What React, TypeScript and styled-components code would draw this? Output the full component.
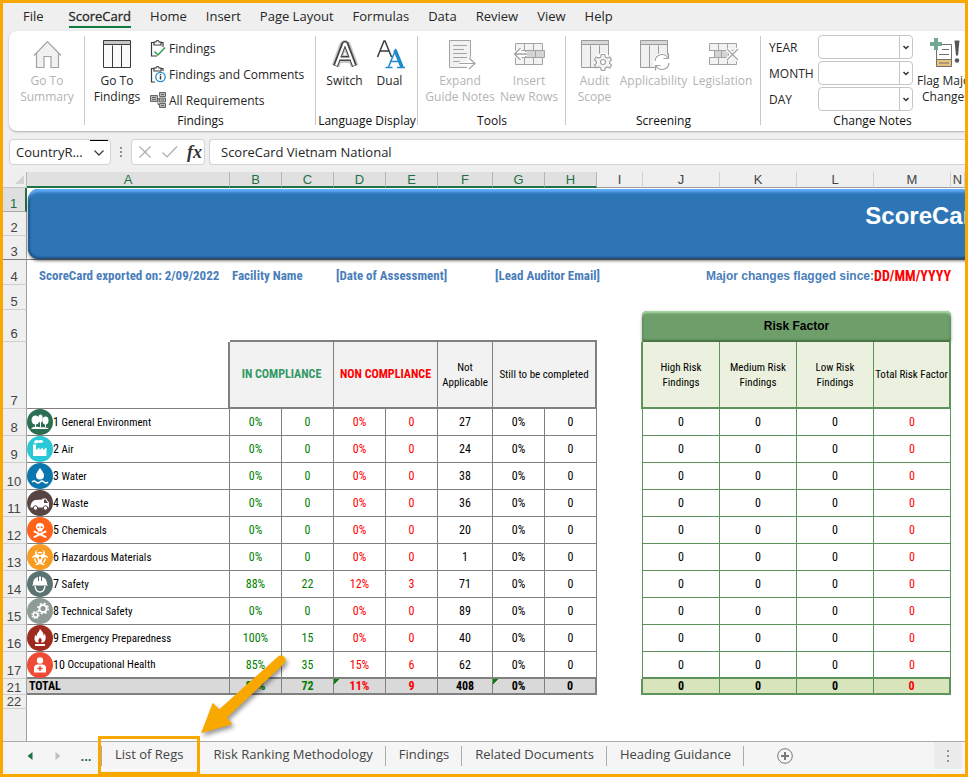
import React from 'react';
import styled, { createGlobalStyle, css } from 'styled-components';
import { FaBiohazard, FaSkullCrossbones } from 'react-icons/fa';

const UI = '"Open Sans", "Noto Sans", sans-serif';
const ARIAL = '"Liberation Sans", Arial, sans-serif';
const NARROW = '"Roboto Condensed", "Liberation Sans", sans-serif';
const ORANGE = '#f9a800';
const GREEN = '#1e7145';
const GREY_LINE = '#808080';
const RISK_LINE = '#5f935c';

const Global = createGlobalStyle`
  *, *::before, *::after { box-sizing: border-box; }
  body { margin: 0; }
  button, input, select { font: inherit; color: inherit; }
  button { background: none; border: 0; padding: 0; cursor: pointer; white-space: nowrap; }
`;

const Frame = styled.div`
  display: flex;
  flex-direction: column;
  min-height: 100vh;
  border: 3px solid ${ORANGE};
  background: #efefef;
  overflow: hidden;
  font-family: ${UI};
  color: #262626;
`;

/* ---------- menu ---------- */

const Menu = styled.nav`
  display: flex;
  gap: 19px;
  height: 28px;
  padding-left: 20px;
  font-size: 13px;
`;

const MenuItem = styled.button<{ $active?: boolean }>`
  height: 25px;
  padding-top: 3px;
  line-height: 20px;
  border-bottom: 2px solid ${p => (p.$active ? '#107c41' : 'transparent')};
  -webkit-text-stroke: ${p => (p.$active ? '0.3px #262626' : '0')};
  &:first-child { margin-right: 6px; }
`;

/* ---------- ribbon ---------- */

const Ribbon = styled.div`
  display: flex;
  flex: none;
  height: 100px;
  margin-left: 6px;
  background: #fff;
  border-radius: 8px 0 0 8px;
  box-shadow: 0 1px 2px rgba(0, 0, 0, 0.28);
  font-size: 12px;
`;

const Group = styled.section<{ $w: number }>`
  position: relative;
  display: flex;
  flex-direction: column;
  flex: none;
  width: ${p => p.$w}px;
  &:not(:last-child)::after {
    content: '';
    position: absolute;
    right: 0;
    top: 5px;
    bottom: 6px;
    width: 1px;
    background: #c8c8c8;
  }
`;

const GroupBody = styled.div<{ $start?: boolean }>`
  display: flex;
  flex: 1;
  justify-content: ${p => (p.$start ? 'flex-start' : 'center')};
`;

const GroupLabel = styled.div`
  height: 18px;
  line-height: 16px;
  text-align: center;
  color: #111;
`;

const BigButton = styled.button<{ $w: number }>`
  display: flex;
  flex-direction: column;
  align-items: center;
  align-self: flex-start;
  flex: none;
  width: ${p => p.$w}px;
  padding-top: 7px;
  line-height: 16px;
  white-space: pre;
  &:disabled { color: #b4b4b4; cursor: default; }
  svg { margin-bottom: 3px; overflow: visible; }
`;

const SmallStack = styled.div`
  display: flex;
  flex-direction: column;
  padding: 4px 0 0 1px;
`;

const SmallButton = styled.button`
  display: flex;
  align-items: center;
  gap: 3px;
  height: 26px;
`;

const DateGrid = styled.div`
  display: grid;
  grid-template-columns: 49px 95px;
  grid-auto-rows: 24px;
  row-gap: 2px;
  align-items: center;
  padding: 4px 4px 0 8px;
  align-self: flex-start;
`;

const SelectBox = styled.div`
  position: relative;
  height: 24px;
  svg {
    position: absolute;
    right: 1px;
    top: 1px;
    pointer-events: none;
  }
`;

const Select = styled.select`
  appearance: none;
  width: 100%;
  height: 24px;
  border: 1px solid #c6c6c6;
  border-radius: 4px;
  background: #fff;
`;

/* ---------- formula bar ---------- */

const FormulaBar = styled.div`
  display: flex;
  flex: none;
  height: 26px;
  margin: 8px 0 7px 6px;
  font-size: 13px;
`;

const NameBox = styled.div`
  display: flex;
  width: 102px;
  background: #fff;
  border: 1px solid #d2d2d2;
  border-radius: 4px;
  input {
    flex: 1;
    min-width: 0;
    padding: 0 0 0 6px;
    border: 0;
    background: none;
    outline: 0;
  }
`;

const NameArrow = styled.button`
  display: grid;
  place-items: center;
  width: 18px;
  margin-right: 2px;
  border-top: 1px solid #000;
`;

const Dots = styled.span`
  display: flex;
  flex-direction: column;
  align-items: center;
  justify-content: center;
  gap: 2px;
  width: 20px;
  i { width: 2px; height: 2px; background: #949494; }
`;

const FxBox = styled.div`
  display: flex;
  align-items: center;
  gap: 9px;
  width: 74px;
  padding: 0 6px;
  background: #fff;
  border: 1px solid #d2d2d2;
  border-radius: 4px;
  svg { display: block; }
`;

const FxButton = styled.button`
  && { font: italic bold 18px/20px "Liberation Serif", serif; }
  color: #333;
`;

const FormulaInput = styled.input`
  flex: 1;
  min-width: 0;
  margin-left: 4px;
  padding: 0 0 0 11px;
  border: 1px solid #d2d2d2;
  border-right: 0;
  border-radius: 4px 0 0 4px;
  background: #fff;
  outline: 0;
`;

/* ---------- sheet ---------- */

const Sheet = styled.main`
  position: relative;
  flex: 1;
  background: #fff;
  border-bottom: 1px solid #ababab;
  overflow: hidden;
`;

const Grid = styled.table`
  width: 100%;
  table-layout: fixed;
  border-collapse: separate;
  border-spacing: 0;
  font-family: ${NARROW};
  font-size: 12px;
  color: #000;
  th, td { padding: 0; overflow: visible; }
`;

const Col = styled.col<{ $w?: number }>`
  width: ${p => (p.$w ? p.$w + 'px' : 'auto')};
`;

const ColHead = styled.th<{ $on?: boolean }>`
  height: 16px;
  font: 13px/13px ${ARIAL};
  text-align: center;
  white-space: nowrap;
  color: ${p => (p.$on ? GREEN : '#444')};
  background: ${p => (p.$on ? '#e0e0e0' : '#efefef')};
  border-bottom: ${p => (p.$on ? '2px solid ' + GREEN : '1px solid #9b9b9b')};
  border-right: 1px solid ${p => (p.$on ? '#b5b5b5' : '#d0d0d0')};
`;

const Corner = styled.td`
  background: #efefef;
  border-right: 1px solid #b5b5b5;
  border-bottom: 1px solid #c4c4c4;
  svg { display: block; margin: 0 0 0 12px; }
`;

const RowHead = styled.th<{ $h: number; $on?: boolean; $frozen?: boolean; $last?: boolean }>`
  height: ${p => p.$h}px;
  font: 13px/13px ${ARIAL};
  text-align: center;
  vertical-align: bottom;
  color: ${p => (p.$on ? GREEN : '#444')};
  background: ${p => (p.$on ? '#dfdfdf' : '#efefef')};
  border-right: ${p => (p.$on ? '2px solid ' + GREEN : '1px solid #a0a0a0')};
  border-bottom: ${p =>
    p.$last ? '0' : '1px solid ' + (p.$frozen ? '#7f7f7f' : p.$on ? '#a8a8a8' : '#cfcfcf')};
  && { padding: 0 1px ${p => (p.$h > 20 ? 1 : 0)}px 0; }
`;

type Tone = 'green' | 'red' | 'black';
const toneColor: Record<Tone, string> = { green: '#008000', red: '#ff0000', black: '#000' };

const Cell = styled.td<{ $tone?: Tone; $risk?: boolean; $total?: boolean; $right?: boolean; $bottom?: boolean }>`
  text-align: center;
  vertical-align: middle;
  line-height: 14px;
  color: ${p => toneColor[p.$tone ?? 'black']};
  border-style: solid;
  border-color: ${p => (p.$risk ? RISK_LINE : GREY_LINE)};
  border-width: 0 ${p => (p.$right ? 2 : 1)}px ${p => (p.$bottom ? 2 : 1)}px 0;
  ${p => p.$total && css`
    font-weight: bold;
    background: ${p.$risk ? '#d8e4bc' : '#d9d9d9'};
  `}
`;

const Flagged = styled(Cell)`
  background: linear-gradient(135deg, #107c10 0 4px, transparent 4px) no-repeat, #d9d9d9;
`;

const TotalLabel = styled(Cell)`
  text-align: left;
  && { padding-left: 2px; }
`;

const Category = styled.td<{ $bottom?: boolean }>`
  border-right: 1px solid ${GREY_LINE};
  border-bottom: ${p => (p.$bottom ? 2 : 1)}px solid ${GREY_LINE};
  font-size: 11px;
`;

const CategoryInner = styled.div`
  display: flex;
  align-items: center;
  height: 25px;
  white-space: pre;
  svg { flex: none; }
  b { font-size: 12px; font-weight: normal; }
`;

const Gap = styled.td<{ $edge?: 'grey' | 'risk' | 'riskThin' }>`
  ${p => p.$edge === 'grey' && css`
    border-right: 2px solid ${GREY_LINE};
    border-bottom: 1px solid ${GREY_LINE};
  `}
  ${p => p.$edge === 'risk' && css`border-right: 2px solid ${RISK_LINE};`}
  ${p => p.$edge === 'riskThin' && css`border-right: 1px solid ${RISK_LINE};`}
`;

const TopEdge = styled.td`
  border-bottom: 2px solid ${GREY_LINE};
`;

const FreezeCell = styled.td`
  border-bottom: 1px solid #7f7f7f;
`;

const HeadCell = styled.th<{ $risk?: boolean; $tone?: 'green' | 'red'; $right?: boolean }>`
  text-align: center;
  vertical-align: middle;
  font-size: ${p => (p.$tone ? 12 : 11)}px;
  font-weight: ${p => (p.$tone ? 'bold' : 'normal')};
  line-height: 15px;
  white-space: pre;
  color: ${p => (p.$tone === 'green' ? '#339966' : p.$tone === 'red' ? '#ff0000' : '#000')};
  background: ${p => (p.$risk ? '#ebf1de' : '#f2f2f2')};
  border-style: solid;
  border-color: ${p => (p.$risk ? RISK_LINE : GREY_LINE)};
  border-width: 0 ${p => (p.$right ? 2 : 1)}px 2px 0;
`;

const Info = styled.td<{ $pad?: number }>`
  vertical-align: bottom;
  color: #4a7ebb;
  font-weight: bold;
  font-size: 13px;
  line-height: 18px;
  white-space: nowrap;
  && { padding-left: ${p => p.$pad ?? 2}px; }
`;

const Since = styled.td`
  vertical-align: bottom;
  font: bold 12px/18px ${ARIAL};
  color: #4a7ebb;
  text-align: right;
  white-space: nowrap;
`;

const SinceDate = styled.td`
  vertical-align: bottom;
  font-size: 14px;
  font-weight: bold;
  line-height: 18px;
  color: #ff0000;
  text-align: left;
  white-space: nowrap;
`;

const RiskCell = styled.td`
  vertical-align: bottom;
`;

const RiskTitle = styled.div`
  height: 31px;
  margin-left: -1px;
  border-radius: 5px 5px 2px 2px;
  background: #6e9e6a;
  box-shadow: inset 0 2px 2px #a9dba6, inset 1px 0 2px #47713f, inset -1px -2px 2px #47713f,
    0 1px 3px rgba(0, 0, 0, 0.4);
  font: bold 12px/31px ${ARIAL};
  text-align: center;
`;

const Banner = styled.div`
  position: absolute;
  left: 25px;
  top: 17px;
  width: 1796px;
  height: 70px;
  border-radius: 11px;
  background: #2e75b6;
  box-shadow: inset 0 5px 3px -2px #62b0ff, inset 0 1px 1px #3a6fa8, inset 2px 0 2px #22598f,
    inset 0 -2px 2px #1f4f80, 0 2px 3px rgba(0, 0, 0, 0.5);
`;

const BannerTitle = styled.h1`
  margin: 0;
  padding-top: 13px;
  font: bold 24px/28px ${ARIAL};
  text-align: center;
  color: #fff;
`;

/* ---------- sheet tabs ---------- */

const TabBar = styled.footer`
  display: flex;
  align-items: center;
  flex: none;
  height: 28px;
  margin-bottom: 4px;
  background: #f5f5f5;
  border-bottom: 1px solid #fff;
  box-shadow: 0 4px 0 #f2f2f2;
  font-size: 13px;
  color: #444;
`;

const NavButton = styled.button`
  display: grid;
  place-items: center;
  width: 28px;
  height: 26px;
  font-weight: bold;
  line-height: 18px;
  color: ${GREEN};
`;

const NavGroup = styled.div`
  display: flex;
  width: 98px;
  padding-left: 13px;
`;

const Tab = styled.button<{ $marked?: boolean }>`
  position: relative;
  padding: 0 12px 0 13px;
  height: 20px;
  line-height: 16px;
  padding-bottom: 3px;
  border-right: 1px solid ${p => (p.$marked ? 'transparent' : '#ababab')};
  ${p => p.$marked && css`
    border-left: 1px solid #ababab;
    padding: 0 16px 3px 13px;
    &::after {
      content: '';
      position: absolute;
      inset: -10px -1px -9px -4px;
      border: 3px solid ${ORANGE};
    }
  `}
`;

const Arrow = styled.svg`
  position: absolute;
  left: 97px;
  bottom: 30px;
  overflow: visible;
  pointer-events: none;
  z-index: 2;
  filter: drop-shadow(2px 3px 2px rgba(0, 0, 0, 0.4));
`;

const AddButton = styled.button`
  margin-left: 33px;
  svg { display: block; }
`;

const ScrollEnd = styled.div`
  display: flex;
  justify-content: center;
  align-self: stretch;
  width: 28px;
  margin: 0 3px 0 auto;
  background: #ececec;
  ${Dots} { gap: 3px; }
`;

/* ---------- icons ---------- */

const HouseIcon = () => (
  <svg width="32" height="32" fill="none" stroke="#a3a3a3" strokeWidth="1.2">
    <path d="M5.5 15v14.5h8v-11h6v11h8V15L16.500 4Z" fill="#f1f1f1" stroke="none" />
    <path d="M3 17.500 16.500 3.500 30 17.500M5.500 15.500v14h7.500v-11h7v11h7.500v-14" />
  </svg>
);

const ColumnsArt = ({ dim }: { dim?: boolean }) => (
  <g stroke={dim ? '#9b9b9b' : '#3b3b3b'} fill={dim ? '#f0f0f0' : '#fafafa'}>
    <path d="M2.500 3.500h27v26h-27zM11.500 7.500v22M20.500 7.500v22" />
    <path d="M2.500 2.500h27v4h-27z" fill={dim ? '#d8d8d8' : '#c6c6c6'} />
  </g>
);

const ColumnsIcon = () => <svg width="32" height="32"><ColumnsArt /></svg>;

const AuditIcon = () => (
  <svg width="32" height="32">
    <ColumnsArt dim />
    <g transform="translate(24 24)" fill="#fff">
      <circle r="9" />
      <path
        d="M-1.700-7.500h3.400l.6 2.500 2 1 2.500-1 1.700 3-1.900 1.700v1.600l1.900 1.700-1.700 3-2.500-1-2 1-.6 2.500h-3.400l-.6-2.500-2-1-2.500 1-1.700-3 1.900-1.700v-1.600l-1.900-1.700 1.700-3 2.500 1 2-1Z"
        stroke="#a3a3a3" strokeWidth="1.200" fill="#f4f4f4"
      />
      <circle r="2.500" stroke="#a3a3a3" strokeWidth="1.200" />
    </g>
  </svg>
);

const RefreshIcon = () => (
  <svg width="32" height="32">
    <ColumnsArt dim />
    <circle cx="24" cy="24" r="9" fill="#fff" />
    <g fill="none" stroke="#a3a3a3" strokeWidth="1.200">
      <path d="M17 23a7 7 0 0 1 13-3M31 25a7 7 0 0 1-13 3" />
      <path d="M30.500 15.500v5h-5M17.500 32.500v-5h5" />
    </g>
  </svg>
);

const RowsArt = () => (
  <g stroke="#a3a3a3" fill="#f2f2f2">
    <path d="M2.500 5.500h27v21h-27zM11.500 5.500v21M20.500 5.500v21M2.500 12.500h27M2.500 19.500h27" />
  </g>
);

const InsertRowsIcon = () => (
  <svg width="32" height="32">
    <RowsArt />
    <path d="M0 13h12v6H0z" fill="#fff" />
    <path d="M12.500 12.500h19v7h-19zM22.500 12.500v7" fill="#d4d4d4" stroke="#a3a3a3" />
    <path d="M14 16H2M8 10l-6 6 6 6" fill="none" stroke="#fff" strokeWidth="4" />
    <path d="M14 16H1.500M7.500 10l-6 6 6 6" fill="none" stroke="#a3a3a3" strokeWidth="1.400" />
  </svg>
);

const LegislationIcon = () => (
  <svg width="32" height="32">
    <RowsArt />
    <path d="M2 13h5v6H2zM21 13h9v6h-9z" fill="#fff" />
    <path d="M7.500 12.500h14v7h-14zM14.500 12.500v7" fill="#d4d4d4" stroke="#a3a3a3" />
    <path d="M20 11l11 11M31 11 20 22" stroke="#fff" strokeWidth="4" />
    <path d="M20 11l11 11M31 11 20 22" stroke="#a3a3a3" strokeWidth="1.200" />
  </svg>
);

const NotesIcon = () => (
  <svg width="32" height="32" fill="none" stroke="#a3a3a3">
    <path d="M5.500 2.500h21v27h-21z" fill="#f1f1f1" />
    <path d="M9 7.500h14M9 11.500h11M9 15.500h14M9 19.500h14M9 23.500h8" />
    <path d="M15 25.500h14M24 20l6 5.500-6 5.500" stroke="#fff" strokeWidth="4" />
    <path d="M15 25.500h15.500M25 20l6 5.500-6 5.500" strokeWidth="1.200" />
  </svg>
);

const SwitchIcon = () => (
  <svg width="32" height="32" fill="none" strokeLinejoin="bevel">
    <path d="M6.500 28 14.500 6h3l8 22M10 21h12" stroke="#c9c9c9" strokeWidth="8" />
    <path d="M6.500 28 15 5.500h2L25.500 28M10.500 20.500h11" stroke="#444" strokeWidth="5" />
    <path d="M7 27.500 15.500 5.500h1L25 27.500M10.500 20.500h11" stroke="#fff" strokeWidth="2.200" />
  </svg>
);

const DualIcon = () => (
  <svg width="32" height="32" fill="none">
    <path d="M3.500 19 10 3h1l6.500 16M6 13h9" stroke="#3b3b3b" strokeWidth="1.500" />
    <path d="M14.500 29 21.500 12l7 17" stroke="#1e8bcd" strokeWidth="1.500" />
    <path d="M21 12l7 17" stroke="#1e8bcd" strokeWidth="3.500" />
    <path d="M16.500 23.500h8" stroke="#1e8bcd" strokeWidth="1.500" />
    <path d="M11.500 29.500h7M23 29.500h8" stroke="#1e8bcd" strokeWidth="1.500" />
  </svg>
);

const FlagIcon = () => (
  <svg width="32" height="32">
    <path d="M6.500 6.500h15v15h-15z" fill="#fff" stroke="#6f6f6f" />
    <path d="M6.500 21.500h15v7h-15z" fill="#e9c27a" stroke="#6f6f6f" />
    <path d="M9 11.500h10M9 16.500h10M9 25h10" stroke="#6f6f6f" />
    <path d="M0 0h12v12H0z" fill="#fff" />
    <path d="M4 0h4v4h4v4H8v4H4V8H0V4h4z" fill="#74a692" />
    <path d="M24.500 2.500h5l-1.500 15h-2z" fill="#555" />
    <circle cx="27" cy="22.500" r="2.200" fill="#555" />
  </svg>
);

const ClipCheckIcon = () => (
  <svg width="16" height="18" fill="none" stroke="#3b3b3b" strokeWidth="1.200">
    <path d="M4 3.500H1.500V17H7M11 3.500h2V8" />
    <path d="M4 3h2a1.500 1.500 0 0 1 3 0h2v3H4z" />
    <path d="M4.500 12.500 8 16l7-7.500" stroke="#2fa24c" strokeWidth="1.500" />
  </svg>
);

const ClipInfoIcon = () => (
  <svg width="16" height="18" fill="none" stroke="#3b3b3b" strokeWidth="1.200">
    <path d="M4 3.500H1.500V17H5M11 3.500h2V6" />
    <path d="M4 3h2a1.500 1.500 0 0 1 3 0h2v3H4z" />
    <circle cx="10.500" cy="12" r="4.700" stroke="#1e8bcd" strokeWidth="1.300" fill="#fff" />
    <path d="M10.500 11v3.500M10.500 9v1.200" strokeWidth="1.500" />
  </svg>
);

const FlowIcon = () => (
  <svg width="16" height="16" stroke="#666" fill="#b9b9b9">
    <path d="M8 6.500h3M8 6.500v6h3" fill="none" />
    <path d="M.5 3.500h7v6h-7zM9.500.5h6v4h-6zM9.500 6h6v4h-6zM9.500 11.500h6v4h-6z" />
    <path d="M2 5.500h4M2 7.500h4M11 2.500h3M11 8h3M11 13.500h3" />
  </svg>
);

const Chevron = () => (
  <svg width="13" height="22" fill="none" stroke="#333">
    <path d="M.5 0v22" stroke="#c6c6c6" />
    <path d="M4.500 10l2.500 2.500L9.500 10" strokeWidth="1.500" />
  </svg>
);

const art: React.ReactNode[] = [
  <g key="trees">
    <ellipse cx="8.500" cy="11" rx="4" ry="4.500" /><ellipse cx="13.500" cy="9.500" rx="2.200" ry="4" />
    <ellipse cx="18.500" cy="11.500" rx="3" ry="4" />
    <path d="M8 14h1v4H8zM13 12h1v6h-1zM18 14h1v4h-1zM4 20c2-3 5-3 8-2s6-1 10 2z" />
  </g>,
  <g key="factory">
    <path d="M6 8.500h3V14l3.500-2.500V14l3.500-2.500V14l3.500-2.500V20H6z" />
    <path d="M7 7c0-2.500 2.500-4 4-2.500 1.500-1 5-.5 5.500 1-1 1.700-4 1.700-5.500 1C9.500 8 8 7 7 7" />
  </g>,
  <g key="water">
    <path d="M13 5c-2 3-4 5-4 7.500a4 4 0 0 0 8 0C17 10 15 8 13 5" />
    <path d="M5 19q2-2 4 0t4 0 4 0 4 0" fill="none" stroke="#fff" strokeWidth="1.300" />
  </g>,
  <g key="truck">
    <path d="M3.500 17.500c0-4 2-7 5-7.500l7-.5v-1h3.500l3 4v5z" />
    <path d="M17 9.500v3.500h4l-2.500-3.500z" fill="#574443" />
    <circle cx="8.500" cy="18" r="2.200" stroke="#574443" /><circle cx="18.500" cy="18" r="2.200" stroke="#574443" />
  </g>,
  <FaSkullCrossbones key="skull" x="5.500" y="6" size={15} color="#fff" />,
  <FaBiohazard key="bio" x="4.500" y="5" size={17} color="#fff" />,
  <g key="helmet">
    <path d="M6 13c0-4 2-6.500 5-7v4h1V5.500h2V10h1V6c3 .5 5 3 5 7l1 1.500H5z" />
    <path d="M8 15c.5 4 2.500 6 5 6s4.500-2 5-6" fill="none" stroke="#fff" strokeWidth="1.400" />
  </g>,
  <g key="gears" fill="none" stroke="#fff">
    <circle cx="16" cy="10.500" r="3.600" strokeWidth="2" />
    <circle cx="16" cy="10.500" r="5.200" strokeWidth="1.500" strokeDasharray="2.100 2" />
    <circle cx="8.500" cy="17" r="2.200" strokeWidth="1.500" />
    <circle cx="8.500" cy="17" r="3.500" strokeWidth="1.200" strokeDasharray="1.500 1.250" />
  </g>,
  <g key="fire">
    <path d="M13 3.500c1 3 4 3.500 3.500 7 1-.5 1-1.500 1-2 2 3 1.500 8-1.500 9h-2c1.500-2 .5-3.500-1-5-1 1.500-2.500 3-1 5h-2C7 16.500 7 12.500 8.500 9.500c.2 1 .5 1.500 1.200 2C9.500 8 12.500 7 13 3.500" />
    <path d="M8 19h10v2H8z" />
  </g>,
  <g key="person">
    <circle cx="13" cy="8.500" r="3.200" /><path d="M7 20.500v-5c0-2 2-3 3.500-3h5c1.500 0 3.500 1 3.500 3v5z" />
    <path d="M12.300 14h1.400v1.800h1.800v1.400h-1.800V19h-1.400v-1.800h-1.800v-1.400h1.800z" fill="#e8452f" />
  </g>,
];

const CategoryIcon = ({ color, index }: { color: string; index: number }) => (
  <svg width="26" height="26" viewBox="0 0 26 26" fill="#fff" aria-hidden>
    <circle cx="13" cy="13" r="13" fill={color} />
    {art[index]}
  </svg>
);

/* ---------- data ---------- */

const menu = ['File', 'ScoreCard', 'Home', 'Insert', 'Page Layout', 'Formulas', 'Data', 'Review', 'View', 'Help'];

const columns: [string, number | undefined][] = [
  ['A', 203], ['B', 52], ['C', 52], ['D', 52], ['E', 52], ['F', 55], ['G', 52], ['H', 52],
  ['I', 46], ['J', 77], ['K', 77], ['L', 77], ['M', 77], ['N', undefined],
];

const rows: [string, string, string[]][] = [
  ['General Environment', '#2b6e51', ['0%', '0', '0%', '0', '27', '0%', '0']],
  ['Air', '#28c8d6', ['0%', '0', '0%', '0', '24', '0%', '0']],
  ['Water', '#0a76ad', ['0%', '0', '0%', '0', '38', '0%', '0']],
  ['Waste', '#574443', ['0%', '0', '0%', '0', '36', '0%', '0']],
  ['Chemicals', '#ff6319', ['0%', '0', '0%', '0', '20', '0%', '0']],
  ['Hazardous Materials', '#f79b22', ['0%', '0', '0%', '0', '1', '0%', '0']],
  ['Safety', '#5b7471', ['88%', '22', '12%', '3', '71', '0%', '0']],
  ['Technical Safety', '#8f9c96', ['0%', '0', '0%', '0', '89', '0%', '0']],
  ['Emergency Preparedness', '#9f2a1e', ['100%', '15', '0%', '0', '40', '0%', '0']],
  ['Occupational Health', '#ee4a35', ['85%', '35', '15%', '6', '62', '0%', '0']],
];

const totals = ['89%', '72', '11%', '9', '408', '0%', '0'];
const tones: Tone[] = ['green', 'green', 'red', 'red', 'black', 'black', 'black'];
const riskTones: Tone[] = ['black', 'black', 'black', 'red'];

const SheetGrid = () => (
  <Grid>
    <colgroup>
      <Col $w={24} />
      {columns.map(([name, w]) => <Col key={name} $w={w} />)}
    </colgroup>
    <thead>
      <tr>
        <Corner><svg width="9" height="9"><path d="M9 0v9H0z" fill="#d2d2d2" /></svg></Corner>
        {columns.map(([name], i) => <ColHead key={name} scope="col" $on={i < 8}>{name}</ColHead>)}
      </tr>
    </thead>
    <tbody>
      <tr><RowHead $h={24} $on>1</RowHead><td colSpan={14} /></tr>
      <tr><RowHead $h={24}>2</RowHead><td colSpan={14} /></tr>
      <tr><RowHead $h={24} $frozen>3</RowHead><FreezeCell colSpan={14} /></tr>
      <tr>
        <RowHead $h={25}>4</RowHead>
        <Info $pad={12}>ScoreCard exported on: 2/09/2022</Info>
        <Info colSpan={2}>Facility Name</Info>
        <Info colSpan={3}>[Date of Assessment]</Info>
        <Info colSpan={3}>[Lead Auditor Email]</Info>
        <Since colSpan={3}>Major changes flagged since:</Since>
        <SinceDate colSpan={2}>DD/MM/YYYY</SinceDate>
      </tr>
      <tr><RowHead $h={25}>5</RowHead><td colSpan={14} /></tr>
      <tr>
        <RowHead $h={32}>6</RowHead>
        <td />
        <TopEdge colSpan={7} />
        <td />
        <RiskCell colSpan={4}><RiskTitle>Risk Factor</RiskTitle></RiskCell>
        <td />
      </tr>
      <tr>
        <RowHead $h={67}>7</RowHead>
        <Gap $edge="grey" />
        <HeadCell colSpan={2} $tone="green">IN COMPLIANCE</HeadCell>
        <HeadCell colSpan={2} $tone="red">NON COMPLIANCE</HeadCell>
        <HeadCell>{'Not\nApplicable'}</HeadCell>
        <HeadCell colSpan={2} $right>Still to be completed</HeadCell>
        <Gap $edge="risk" />
        <HeadCell $risk>{'High Risk\nFindings'}</HeadCell>
        <HeadCell $risk>{'Medium Risk\nFindings'}</HeadCell>
        <HeadCell $risk>{'Low Risk\nFindings'}</HeadCell>
        <HeadCell $risk $right>Total Risk Factor</HeadCell>
        <td />
      </tr>
      {rows.map(([name, color, values], i) => {
        const last = i === rows.length - 1;
        return (
          <tr key={name}>
            <RowHead $h={27}>{i + 8}</RowHead>
            <Category $bottom={last}>
              <CategoryInner><CategoryIcon color={color} index={i} /><b>{i + 1}</b>{' ' + name}</CategoryInner>
            </Category>
            {values.map((v, k) => <Cell key={k} $tone={tones[k]} $bottom={last}>{v}</Cell>)}
            <Gap $edge="riskThin" />
            {riskTones.map((tone, k) => <Cell key={k} $risk $tone={tone} $bottom={last}>0</Cell>)}
            <td />
          </tr>
        );
      })}
      <tr>
        <RowHead $h={16}>21</RowHead>
        <TotalLabel $total $bottom>TOTAL</TotalLabel>
        {totals.map((v, k) => {
          const Box = k === 2 || k === 5 ? Flagged : Cell;
          return <Box key={k} $total $bottom $tone={tones[k]} $right={k === 6}>{v}</Box>;
        })}
        <Gap $edge="risk" />
        {riskTones.map((tone, k) => <Cell key={k} $total $risk $bottom $tone={tone} $right={k === 3}>0</Cell>)}
        <td />
      </tr>
      <tr><RowHead $h={14}>22</RowHead><td colSpan={14} /></tr>
      <tr><RowHead $h={32} $last aria-hidden /><td colSpan={14} /></tr>
    </tbody>
  </Grid>
);

export default function App() {
  return (
    <Frame>
      <Global />
      <Menu>
        {menu.map(m => <MenuItem key={m} $active={m === 'ScoreCard'}>{m}</MenuItem>)}
      </Menu>

      <Ribbon>
        <Group $w={76}>
          <GroupBody><BigButton $w={74} disabled><HouseIcon />{'Go To\nSummary'}</BigButton></GroupBody>
        </Group>
        <Group $w={231}>
          <GroupBody $start>
            <BigButton $w={64}><ColumnsIcon />{'Go To\nFindings'}</BigButton>
            <SmallStack>
              <SmallButton><ClipCheckIcon />Findings</SmallButton>
              <SmallButton><ClipInfoIcon />Findings and Comments</SmallButton>
              <SmallButton><FlowIcon />All Requirements</SmallButton>
            </SmallStack>
          </GroupBody>
          <GroupLabel>Findings</GroupLabel>
        </Group>
        <Group $w={102}>
          <GroupBody>
            <BigButton $w={45}><SwitchIcon />Switch</BigButton>
            <BigButton $w={45}><DualIcon />Dual</BigButton>
          </GroupBody>
          <GroupLabel>Language Display</GroupLabel>
        </Group>
        <Group $w={148}>
          <GroupBody>
            <BigButton $w={74} disabled><NotesIcon />{'Expand\nGuide Notes'}</BigButton>
            <BigButton $w={64} disabled><InsertRowsIcon />{'Insert\nNew Rows'}</BigButton>
          </GroupBody>
          <GroupLabel>Tools</GroupLabel>
        </Group>
        <Group $w={195}>
          <GroupBody>
            <BigButton $w={46} disabled><AuditIcon />{'Audit\nScope'}</BigButton>
            <BigButton $w={72} disabled><RefreshIcon />Applicability</BigButton>
            <BigButton $w={66} disabled><LegislationIcon />Legislation</BigButton>
          </GroupBody>
          <GroupLabel>Screening</GroupLabel>
        </Group>
        <Group $w={223}>
          <GroupBody $start>
            <DateGrid>
              {['YEAR', 'MONTH', 'DAY'].map(label => (
                <React.Fragment key={label}>
                  <label htmlFor={'since-' + label}>{label}</label>
                  <SelectBox><Select id={'since-' + label} /><Chevron /></SelectBox>
                </React.Fragment>
              ))}
            </DateGrid>
            <BigButton $w={58}><FlagIcon />{'Flag Major\nChanges'}</BigButton>
          </GroupBody>
          <GroupLabel>Change Notes</GroupLabel>
        </Group>
      </Ribbon>

      <FormulaBar>
        <NameBox>
          <input aria-label="Name box" defaultValue="CountryR..." />
          <NameArrow aria-label="Show names">
            <svg width="12" height="8" fill="none" stroke="#444" strokeWidth="1.400"><path d="M1.500 1.500 6 6l4.500-4.500" /></svg>
          </NameArrow>
        </NameBox>
        <Dots><i /><i /><i /></Dots>
        <FxBox>
          <button aria-label="Cancel">
            <svg width="14" height="14" fill="none" stroke="#ababab" strokeWidth="1.200"><path d="M1.500 1.500l11 11M12.500 1.500l-11 11" /></svg>
          </button>
          <button aria-label="Enter">
            <svg width="17" height="14" fill="none" stroke="#ababab" strokeWidth="1.200"><path d="M1.500 7.500 6 12 16 1.500" /></svg>
          </button>
          <FxButton aria-label="Insert function">fx</FxButton>
        </FxBox>
        <FormulaInput aria-label="Formula" defaultValue="ScoreCard Vietnam National" />
      </FormulaBar>

      <Sheet>
        <SheetGrid />
        <Banner><BannerTitle>ScoreCard</BannerTitle></Banner>
      </Sheet>

      <TabBar>
        <NavGroup>
          <NavButton aria-label="Previous sheet"><svg width="6" height="8"><path d="M5.500 0v8L.5 4z" fill={GREEN} /></svg></NavButton>
          <NavButton aria-label="Next sheet"><svg width="6" height="8"><path d="M.5 0v8l5-4z" fill="#c0c0c0" /></svg></NavButton>
          <NavButton>...</NavButton>
        </NavGroup>
        <Tab $marked>
          List of Regs
          <Arrow width="90" height="80" viewBox="199 656 90 80">
            <path
              d="M201 733.300 212.700 702.700 219.300 709.300 277.500 656.900A4.600 4.600 0 0 1 284.200 663.500L227 717.500 232.300 724.300Z"
              fill={ORANGE}
            />
          </Arrow>
        </Tab>
        <Tab>Risk Ranking Methodology</Tab>
        <Tab>Findings</Tab>
        <Tab>Related Documents</Tab>
        <Tab>Heading Guidance</Tab>
        <AddButton aria-label="New sheet">
          <svg width="16" height="16" fill="none" stroke="#777">
            <circle cx="8" cy="8" r="7.300" /><path d="M8 4v8M4 8h8" strokeWidth="2" />
          </svg>
        </AddButton>
        <ScrollEnd><Dots><i /><i /><i /></Dots></ScrollEnd>
      </TabBar>
    </Frame>
  );
}
